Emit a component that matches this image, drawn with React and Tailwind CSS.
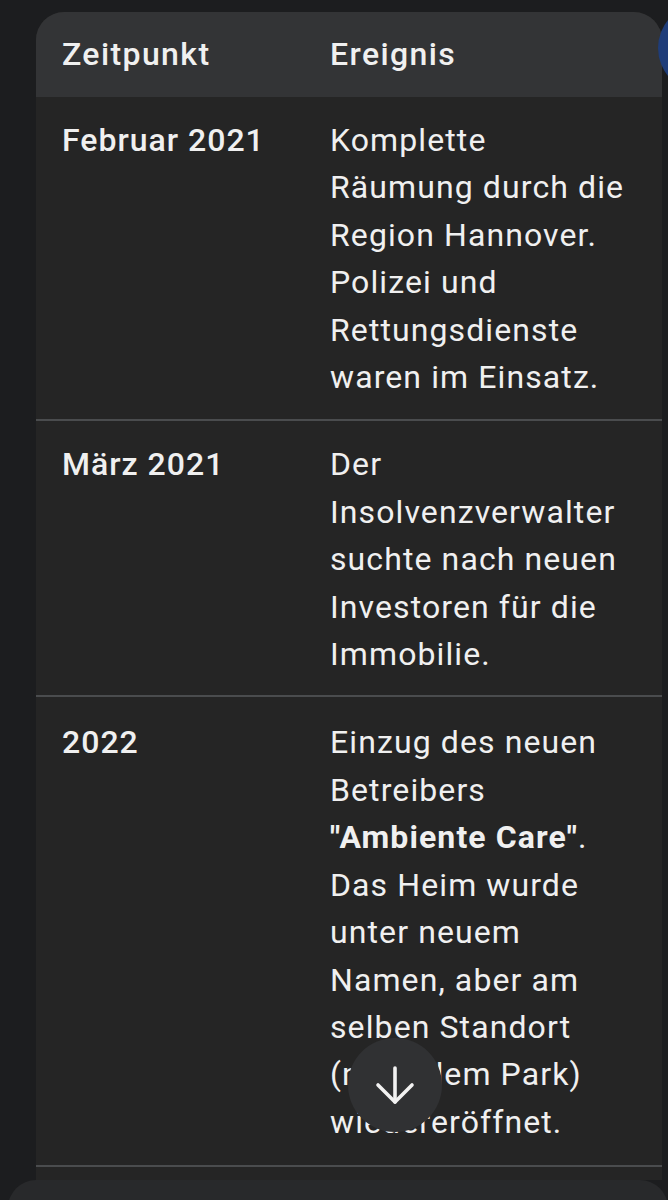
import React from "react";

const rows = [
  {
    when: "Februar 2021",
    lines: [
      "Komplette",
      "Räumung durch die",
      "Region Hannover.",
      "Polizei und",
      "Rettungsdienste",
      "waren im Einsatz.",
    ],
    pt: "pt-[20px]",
    pb: "pb-[18px]",
  },
  {
    when: "März 2021",
    lines: [
      "Der",
      "Insolvenzverwalter",
      "suchte nach neuen",
      "Investoren für die",
      "Immobilie.",
    ],
    pt: "pt-[20px]",
    pb: "pb-[17px]",
  },
  {
    when: "2022",
    lines: [
      "Einzug des neuen",
      "Betreibers",
      <span key="b">
        <span className="font-bold">"Ambiente Care"</span>.
      </span>,
      "Das Heim wurde",
      "unter neuem",
      "Namen, aber am",
      "selben Standort",
      "(nahe dem Park)",
      "wiedereröffnet.",
    ],
    pt: "pt-[22px]",
    pb: "pb-[19px]",
  },
];

export default function App() {
  return (
    <div
      className="relative min-h-[1200px] h-[1200px] overflow-hidden bg-[#1c1d1f] text-[#f0f0f0]"
      style={{ fontFamily: "Roboto, 'Noto Sans', Arial, sans-serif" }}
    >
      <div className="pt-[12px] pl-[36px] pr-[6px]">
        <div className="rounded-t-[28px] bg-[#252525] overflow-hidden pb-[13px]">
          <div className="grid grid-cols-[294px_1fr] bg-[#333436] pt-[19px] pb-[19px] text-[32px] leading-[47px] tracking-[1.4px] font-medium">
            <div className="pl-[26px]">Zeitpunkt</div>
            <div>Ereignis</div>
          </div>
          {rows.map((r, i) => (
            <div
              key={i}
              className={`grid grid-cols-[294px_1fr] border-b-2 border-[#4a4c4e] ${r.pt} ${r.pb} text-[32px] leading-[47.4px] tracking-[1.1px]`}
            >
              <div className="pl-[26px] font-medium tracking-[1px]">{r.when}</div>
              <div>
                {r.lines.map((l, j) => (
                  <div key={j} className="whitespace-nowrap">
                    {l}
                  </div>
                ))}
              </div>
            </div>
          ))}
        </div>
      </div>
      <div className="ml-[8px] h-[40px] rounded-t-[28px] bg-[#28292b]" />

      <div className="absolute left-[348px] top-[1038px] flex h-[94px] w-[94px] items-center justify-center rounded-full bg-[#303133]">
        <svg width="40" height="40" viewBox="0 0 40 40" fill="none" stroke="#f2f2f2" strokeWidth="3.6" strokeLinecap="round" strokeLinejoin="round">
          <path d="M20 3 V37" />
          <path d="M3 20 L20 37 L37 20" />
        </svg>
      </div>

      <div className="absolute left-[658px] top-[4px] h-[88px] w-[88px] rounded-full bg-[#1f3d79]" />
    </div>
  );
}
